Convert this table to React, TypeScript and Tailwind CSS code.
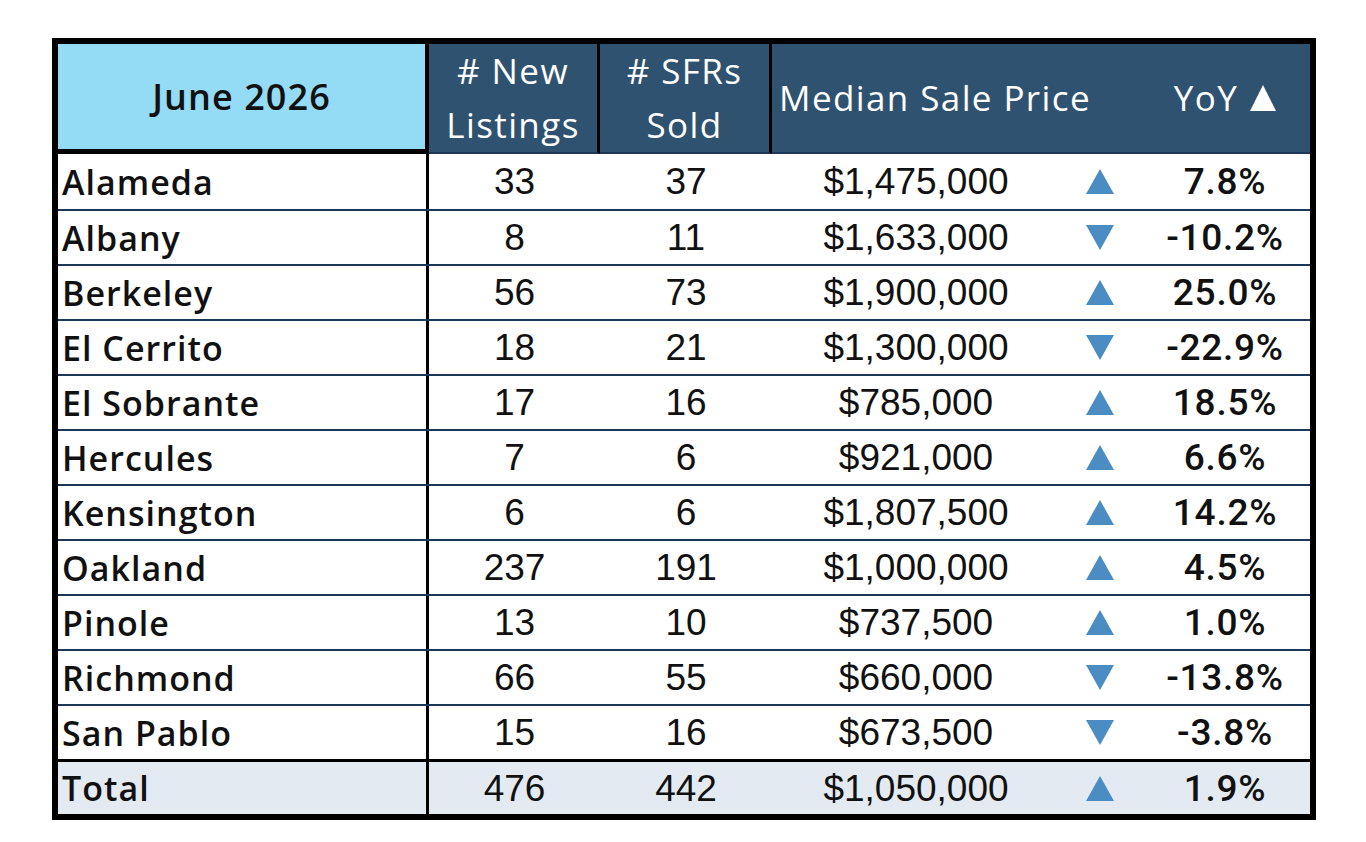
import React from "react";

type Row = [string, string, string, string, "up" | "down", string];

const rows: Row[] = [
  ["Alameda", "33", "37", "$1,475,000", "up", "7.8%"],
  ["Albany", "8", "11", "$1,633,000", "down", "-10.2%"],
  ["Berkeley", "56", "73", "$1,900,000", "up", "25.0%"],
  ["El Cerrito", "18", "21", "$1,300,000", "down", "-22.9%"],
  ["El Sobrante", "17", "16", "$785,000", "up", "18.5%"],
  ["Hercules", "7", "6", "$921,000", "up", "6.6%"],
  ["Kensington", "6", "6", "$1,807,500", "up", "14.2%"],
  ["Oakland", "237", "191", "$1,000,000", "up", "4.5%"],
  ["Pinole", "13", "10", "$737,500", "up", "1.0%"],
  ["Richmond", "66", "55", "$660,000", "down", "-13.8%"],
  ["San Pablo", "15", "16", "$673,500", "down", "-3.8%"],
];

const total: Row = ["Total", "476", "442", "$1,050,000", "up", "1.9%"];

function Tri({ dir, color }: { dir: "up" | "down"; color: string }) {
  return (
    <svg width="28" height="25" viewBox="0 0 28 25" className="block">
      {dir === "up" ? (
        <polygon points="14,0 28,25 0,25" fill={color} />
      ) : (
        <polygon points="0,0 28,0 14,25" fill={color} />
      )}
    </svg>
  );
}

const gridCols = "grid grid-cols-[371px_171px_172px_288px_80px_170px]";

function BodyRow({ r, isTotal, first }: { r: Row; isTotal?: boolean; first?: boolean }) {
  const border = first
    ? ""
    : isTotal
    ? "border-t-[3px] border-black"
    : "border-t-[2px] border-[#1b3656]";
  return (
    <div className={`${gridCols} h-[55px] ${border} ${isTotal ? "bg-[#e3eaf2]" : "bg-white"} text-[#111111]`}>
      <div className="flex items-center border-r-[3px] border-black pl-[4px] font-['Open_Sans',sans-serif] font-semibold text-[34px] tracking-[0.03em] leading-none">
        {r[0]}
      </div>
      <div className="flex items-center justify-center font-['Liberation_Sans',Arial,sans-serif] text-[37px] leading-none">
        {r[1]}
      </div>
      <div className="flex items-center justify-center font-['Liberation_Sans',Arial,sans-serif] text-[37px] leading-none">
        {r[2]}
      </div>
      <div className="flex items-center justify-center font-['Liberation_Sans',Arial,sans-serif] text-[37px] leading-none">
        {r[3]}
      </div>
      <div className="flex items-center justify-center">
        <Tri dir={r[4]} color="#4b8dc2" />
      </div>
      <div className="flex items-center justify-center font-['Roboto',sans-serif] font-medium text-[37px] tracking-[0.02em] leading-none">
        {r[5]}
      </div>
    </div>
  );
}

const headDark =
  "bg-[#2f5271] border-b-2 border-b-[#1d3857] font-['Open_Sans',sans-serif] text-[35px] tracking-[0.04em] text-white";

export default function App() {
  return (
    <div className="w-[1366px] h-[842px] bg-white pt-[38px] pl-[52px]">
      <div className="w-[1264px] border-[6px] border-black">
        <div className={`${gridCols} h-[110px]`}>
          <div className="flex items-center justify-center bg-[#94dbf6] border-r-[4px] border-b-[5px] border-black font-['Open_Sans',sans-serif] font-semibold text-[36px] tracking-[0.03em] text-[#111111]">
            June 2026
          </div>
          <div className={`flex flex-col items-center justify-center border-r-[3px] border-r-black leading-[54px] ${headDark}`}>
            <span># New</span>
            <span>Listings</span>
          </div>
          <div className={`flex flex-col items-center justify-center border-r-[3px] border-r-black leading-[54px] ${headDark}`}>
            <span># SFRs</span>
            <span>Sold</span>
          </div>
          <div className={`col-span-2 flex items-center pl-[7px] ${headDark}`}>
            Median Sale Price
          </div>
          <div className={`flex items-center justify-center gap-[12px] ${headDark}`}>
            <span>YoY</span>
            <svg width="26" height="26" viewBox="0 0 26 26" className="block">
              <polygon points="13,0 26,26 0,26" fill="#ffffff" />
            </svg>
          </div>
        </div>
        {rows.map((r, i) => (
          <BodyRow key={r[0]} r={r} first={i === 0} />
        ))}
        <BodyRow r={total} isTotal />
      </div>
    </div>
  );
}
